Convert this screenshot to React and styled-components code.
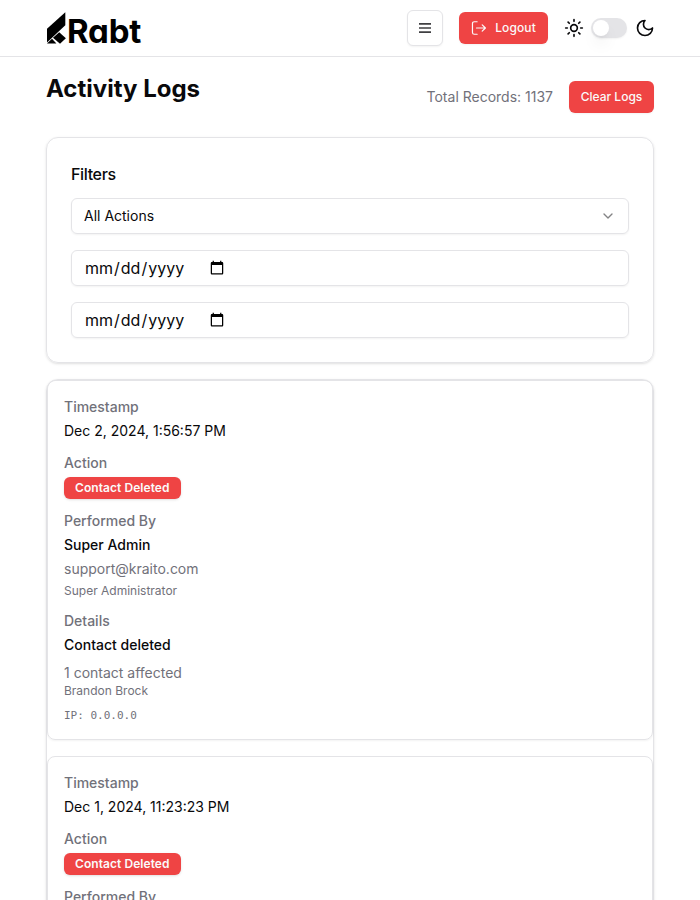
import React from "react";
import styled, { createGlobalStyle } from "styled-components";

const Global = createGlobalStyle`
  *, *::before, *::after { box-sizing: border-box; }
  html, body, #root { height: 100%; }
  body {
    margin: 0;
    overflow: hidden;
    background: #fff;
    color: #09090b;
    font-family: Inter, sans-serif;
    font-size: 16px;
    line-height: 24px;
  }
  h1, h2, p { margin: 0; }
  button, input { font-family: inherit; color: inherit; margin: 0; }
`;

const Page = styled.div`
  height: 900px;
  overflow: hidden;
`;

const Header = styled.header`
  height: 57px;
  padding: 0 45px 0 46px;
  border-bottom: 1px solid #e4e4e7;
  display: flex;
  align-items: center;
  justify-content: space-between;
`;

const Brand = styled.div`
  display: flex;
  align-items: center;
  height: 32px;
`;

const BrandMark = styled.svg`
  width: 20px;
  height: 32px;
  flex: none;
`;

const BrandName = styled.span`
  margin-left: 1px;
  padding-top: 6px;
  font-size: 33px;
  line-height: 32px;
  font-weight: 700;
  letter-spacing: -0.2px;
  font-feature-settings: "cv11";
  color: #000;
`;

const Actions = styled.div`
  display: flex;
  align-items: center;
  gap: 16px;
`;

const MenuButton = styled.button`
  width: 36px;
  height: 36px;
  padding: 0;
  border: 1px solid #e4e4e7;
  border-radius: 6px;
  background: #fff;
  box-shadow: 0 1px 2px rgba(0, 0, 0, 0.05);
  display: flex;
  align-items: center;
  justify-content: center;
`;

const DangerButton = styled.button`
  width: ${(p) => p.$width}px;
  height: 32px;
  padding: 0;
  border: 0;
  border-radius: 6px;
  background: #ef4444;
  color: #fafafa;
  font-size: 12px;
  line-height: 16px;
  font-weight: 500;
  letter-spacing: ${(p) => p.$tracking || 0}px;
  box-shadow: 0 1px 2px rgba(0, 0, 0, 0.05);
  display: flex;
  align-items: center;
  justify-content: center;
  gap: 8px;
`;

const ThemeSwitch = styled.div`
  display: flex;
  align-items: center;
  gap: 8px;
`;

const Track = styled.button`
  width: 36px;
  height: 20px;
  margin-left: -1px;
  padding: 0 2px;
  border: 0;
  border-radius: 10px;
  background: #e4e4e7;
  box-shadow: 0 1px 2px rgba(0, 0, 0, 0.05);
  display: flex;
  align-items: center;
`;

const Thumb = styled.span`
  width: 16px;
  height: 16px;
  border-radius: 50%;
  background: #fff;
  box-shadow: 0 10px 15px -3px rgba(0, 0, 0, 0.1), 0 4px 6px -4px rgba(0, 0, 0, 0.1);
`;

const Main = styled.main`
  padding: 16px 46px 0;
  display: flex;
  flex-direction: column;
`;

const TitleRow = styled.div`
  display: flex;
  justify-content: space-between;
  align-items: flex-start;
  height: 64px;
`;

const Title = styled.h1`
  font-size: 24px;
  line-height: 32px;
  font-weight: 700;
`;

const TitleActions = styled.div`
  display: flex;
  align-items: center;
  gap: 16px;
  padding-top: 8px;
`;

const Total = styled.span`
  font-size: 14px;
  line-height: 20px;
  color: #71717a;
`;

const Filters = styled.section`
  border: 1px solid #e4e4e7;
  border-radius: 12px;
  padding: 24px;
  box-shadow: 0 1px 3px rgba(0, 0, 0, 0.1), 0 1px 2px -1px rgba(0, 0, 0, 0.1);
  display: flex;
  flex-direction: column;
  gap: 16px;
`;

const FiltersTitle = styled.h2`
  font-size: 16px;
  line-height: 24px;
  font-weight: 500;
  letter-spacing: -0.35px;
  margin-bottom: -4px;
`;

const SelectButton = styled.button`
  height: 36px;
  width: 100%;
  padding: 0 12px;
  border: 1px solid #e4e4e7;
  border-radius: 6px;
  background: transparent;
  box-shadow: 0 1px 2px rgba(0, 0, 0, 0.05);
  font-size: 14px;
  line-height: 20px;
  display: flex;
  align-items: center;
  justify-content: space-between;

  svg { opacity: 0.5; }
`;

const DateInput = styled.input`
  display: flex;
  height: 36px;
  width: 100%;
  padding: 4px 12px;
  border: 1px solid #e4e4e7;
  border-radius: 6px;
  background: transparent;
  box-shadow: 0 1px 2px rgba(0, 0, 0, 0.05);
  font-size: 16px;
  line-height: 24px;
`;

const LogList = styled.section`
  margin-top: 16px;
  border: 1px solid #e4e4e7;
  border-radius: 12px;
  box-shadow: 0 1px 3px rgba(0, 0, 0, 0.1), 0 1px 2px -1px rgba(0, 0, 0, 0.1);
  display: flex;
  flex-direction: column;
  gap: 16px;
`;

const LogCard = styled.article`
  border: 1px solid #e4e4e7;
  border-radius: 8px;
  padding: 16px;
  box-shadow: 0 1px 2px rgba(0, 0, 0, 0.05);
  display: flex;
  flex-direction: column;
  gap: 12px;
`;

const Field = styled.div`
  display: flex;
  flex-direction: column;
  align-items: flex-start;
  gap: 4px;
  font-size: 14px;
  line-height: 20px;
`;

const Label = styled.p`
  font-weight: 500;
  color: #71717a;
`;

const Value = styled.p`
  font-weight: ${(p) => (p.$strong ? 500 : 400)};
`;

const Muted = styled.p`
  color: #71717a;
  font-size: ${(p) => (p.$small ? 12 : 14)}px;
  line-height: ${(p) => (p.$small ? 16 : 20)}px;
`;

const Affected = styled.div`
  margin-top: 4px;
`;

const Ip = styled.p`
  margin-top: 4px;
  height: 16px;
  font-family: "DejaVu Sans Mono", "Liberation Mono", monospace;
  font-size: 11px;
  line-height: 17px;
  color: #71717a;
`;

const Badge = styled.span`
  padding: 2px 10px;
  border: 1px solid transparent;
  border-radius: 6px;
  background: #ef4444;
  color: #fafafa;
  font-size: 12px;
  line-height: 16px;
  font-weight: 600;
  letter-spacing: 0.06px;
  box-shadow: 0 1px 3px rgba(0, 0, 0, 0.1), 0 1px 2px -1px rgba(0, 0, 0, 0.1);
`;

const LineIcon = styled.svg.attrs((p) => ({
  width: p.$size || 20,
  height: p.$size || 20,
  viewBox: "0 0 24 24",
  fill: "none",
  stroke: "currentColor",
  strokeWidth: p.$stroke || 2,
  strokeLinecap: "round",
  strokeLinejoin: "round",
}))`
  display: block;
  flex: none;
`;

const MenuIcon = styled.svg`
  width: 12px;
  height: 12px;
  color: #3f3f42;
`;

const logs = [
  { time: "Dec 2, 2024, 1:56:57 PM", contact: "Brandon Brock" },
  { time: "Dec 1, 2024, 11:23:23 PM", contact: "Brandon Brock" },
];

function LogEntry({ time, contact }) {
  return (
    <LogCard>
      <Field>
        <Label>Timestamp</Label>
        <Value>{time}</Value>
      </Field>
      <Field>
        <Label>Action</Label>
        <Badge>Contact Deleted</Badge>
      </Field>
      <Field>
        <Label>Performed By</Label>
        <Value $strong>Super Admin</Value>
        <Muted>support@kraito.com</Muted>
        <Muted $small>Super Administrator</Muted>
      </Field>
      <Field>
        <Label>Details</Label>
        <Value $strong>Contact deleted</Value>
        <Affected>
          <Muted>1 contact affected</Muted>
          <Muted $small>{contact}</Muted>
        </Affected>
        <Ip>IP: 0.0.0.0</Ip>
      </Field>
    </LogCard>
  );
}

export default function App() {
  return (
    <Page>
      <Global />
      <Header>
        <Brand>
          <BrandMark viewBox="0 0 20 32">
            <path d="M19.3 0.3V13.2L1 30.6V16.8Z" fill="#000" />
            <path d="M7 25.8L13.2 20.2L19.9 26.2L14 31.8Z" fill="#000" />
            <path d="M1 31.4L6 26.8L10.4 31.4Z" fill="#000" />
          </BrandMark>
          <BrandName>Rabt</BrandName>
        </Brand>
        <Actions>
          <MenuButton aria-label="Menu">
            <MenuIcon viewBox="0 0 12 12">
              <path d="M0 1.8H12M0 6H12M0 10.2H12" stroke="currentColor" strokeWidth="1.7" />
            </MenuIcon>
          </MenuButton>
          <DangerButton $width={89} $tracking={0.12}>
            <LineIcon $size={16} $stroke={1.8}>
              <path d="M9.2 2.6H5Q2.2 2.6 2.2 5.4V18.6Q2.2 21.4 5 21.4H9.2M8.2 12H21.6M16.8 7.2L21.6 12L16.8 16.8" />
            </LineIcon>
            Logout
          </DangerButton>
          <ThemeSwitch>
            <LineIcon>
              <circle cx="12" cy="12" r="4" />
              <path d="M12 2v2M12 20v2M4.93 4.93l1.41 1.41M17.66 17.66l1.41 1.41M2 12h2M20 12h2M6.34 17.66l-1.41 1.41M19.07 4.93l-1.41 1.41" />
            </LineIcon>
            <Track role="switch" aria-label="Dark mode">
              <Thumb />
            </Track>
            <LineIcon>
              <path d="M12 3a6 6 0 0 0 9 9 9 9 0 1 1-9-9Z" />
            </LineIcon>
          </ThemeSwitch>
        </Actions>
      </Header>
      <Main>
        <TitleRow>
          <Title>Activity Logs</Title>
          <TitleActions>
            <Total>Total Records: 1137</Total>
            <DangerButton $width={85}>Clear Logs</DangerButton>
          </TitleActions>
        </TitleRow>
        <Filters>
          <FiltersTitle>Filters</FiltersTitle>
          <SelectButton>
            All Actions
            <LineIcon $size={16}>
              <path d="M6 9l6 6 6-6" />
            </LineIcon>
          </SelectButton>
          <DateInput type="date" aria-label="Start date" />
          <DateInput type="date" aria-label="End date" />
        </Filters>
        <LogList>
          {logs.map((log) => (
            <LogEntry key={log.time} {...log} />
          ))}
        </LogList>
      </Main>
    </Page>
  );
}
